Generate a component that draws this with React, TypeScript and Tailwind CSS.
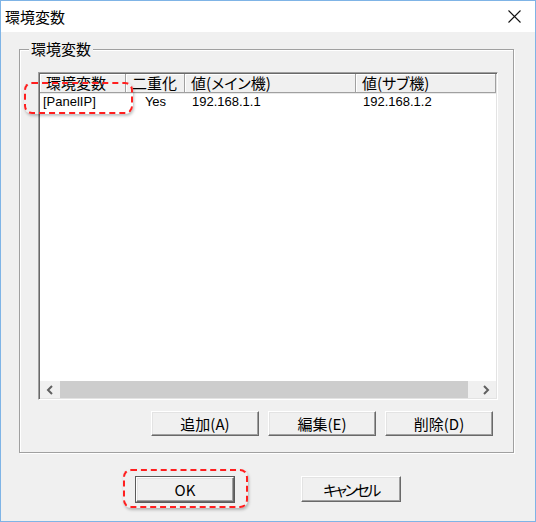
const jp = "font-['Noto_Sans_CJK_JP',sans-serif] text-[15px] leading-none [font-feature-settings:'palt']";
const en = "font-['Liberation_Sans',sans-serif] text-[13px] leading-none";

const columns = [
  { label: "環境変数", w: "w-[86px]" },
  { label: "二重化", w: "w-[59px]" },
  { label: "値(メイン機)", w: "w-[171px]" },
  { label: "値(サブ機)", w: "flex-1" },
];

function Button({ label, wide, isDefault, extra }: { label: string; wide?: boolean; isDefault?: boolean; extra?: string }) {
  const face = (
    <div
      className={`flex h-full w-full items-center justify-center border border-t-white border-l-white border-b-[#696969] border-r-[#696969] bg-[#f0f0f0] shadow-[inset_-1px_-1px_0_#a0a0a0,inset_1px_1px_0_#e3e3e3] ${jp} ${extra ?? ""}`}
    >
      {label}
    </div>
  );
  if (isDefault) {
    return <div className="h-[27px] w-[100px] border border-[#5a5a5a]">{face}</div>;
  }
  return <div className={wide ? "h-[25px] w-[108px]" : "h-[26px] w-[100px]"}>{face}</div>;
}

function Chevron({ dir }: { dir: "left" | "right" }) {
  return (
    <svg width="8" height="10" viewBox="0 0 8 10">
      <path
        d={dir === "left" ? "M6 1 L2 5 L6 9" : "M2 1 L6 5 L2 9"}
        fill="none"
        stroke="#606060"
        strokeWidth="2"
      />
    </svg>
  );
}

export default function App() {
  return (
    <div className="flex h-[522px] w-[536px] flex-col border border-[#7fb4e6] bg-[#f0f0f0] text-black">
      {/* title bar */}
      <div className="flex h-[31px] items-center justify-between bg-white pl-[4px] pr-[14px]">
        <span className={jp}>環境変数</span>
        <svg width="13" height="13" viewBox="0 0 13 13">
          <path d="M0.5 0.5 L12.5 12.5 M12.5 0.5 L0.5 12.5" stroke="#111" strokeWidth="1.1" />
        </svg>
      </div>

      <div className="relative flex flex-1 flex-col pl-[18px] pr-[21px] pt-[17px]">
        {/* group box */}
        <div className="relative flex h-[404px] flex-col border border-[#a0a0a0] pb-[16px] pl-[18px] pr-[15px] pt-[22px] shadow-[1px_1px_0_#fff,inset_1px_1px_0_#fff]">
          <span className={`absolute left-[9px] top-[-9px] bg-[#f0f0f0] px-[2px] ${jp}`}>環境変数</span>

          {/* list view */}
          <div className="flex h-[328px] flex-col border border-t-[#a0a0a0] border-l-[#a0a0a0] border-b-white border-r-white bg-white shadow-[inset_1px_1px_0_#696969,inset_-1px_-1px_0_#e3e3e3] p-[1px]">
            <div className="flex h-[19px] border-b border-[#a0a0a0] bg-[#f0f0f0] shadow-[0_1px_0_#e8e8e8]">
              {columns.map((c) => (
                <div
                  key={c.label}
                  className={`${c.w} flex items-center border-r border-[#a0a0a0] pb-[2px] pl-[6px] shadow-[inset_1px_1px_0_#fff] ${jp}`}
                >
                  {c.label}
                </div>
              ))}
            </div>
            <div className="flex h-[17px] items-center">
              <div className={`w-[86px] pl-[3px] ${en}`}>[PanelIP]</div>
              <div className={`w-[59px] text-center ${en}`}>Yes</div>
              <div className={`w-[171px] pl-[7px] ${en}`}>192.168.1.1</div>
              <div className={`flex-1 pl-[7px] ${en}`}>192.168.1.2</div>
            </div>
            <div className="flex-1" />
            {/* horizontal scrollbar */}
            <div className="flex h-[17px] bg-[#f0f0f0]">
              <div className="flex w-[20px] items-center justify-center">
                <Chevron dir="left" />
              </div>
              <div className="mr-[8px] flex-1 bg-[#cdcdcd]" />
              <div className="flex w-[20px] items-center justify-center">
                <Chevron dir="right" />
              </div>
            </div>
          </div>

          <div className="mr-[5px] mt-[11px] flex justify-end gap-[9px]">
            <Button label="追加(A)" wide />
            <Button label="編集(E)" wide />
            <Button label="削除(D)" wide />
          </div>
        </div>

        <div className="ml-[116px] mt-[23px] flex items-start gap-[66px]">
          <Button label="OK" isDefault />
          <Button label="キャンセル" extra="tracking-[-2.5px]" />
        </div>

        {/* red highlight marks */}
        <div className="pointer-events-none absolute left-[23px] top-[50px] h-[32px] w-[109px] rounded-[8px] border-2 border-dashed border-[#ff1f1f] shadow-[1px_2px_3px_rgba(0,0,0,0.25)]" />
        <div className="pointer-events-none absolute left-[122px] top-[437px] h-[39px] w-[125px] rounded-[8px] border-2 border-dashed border-[#ff1f1f] shadow-[1px_2px_3px_rgba(0,0,0,0.25)]" />
      </div>
    </div>
  );
}
